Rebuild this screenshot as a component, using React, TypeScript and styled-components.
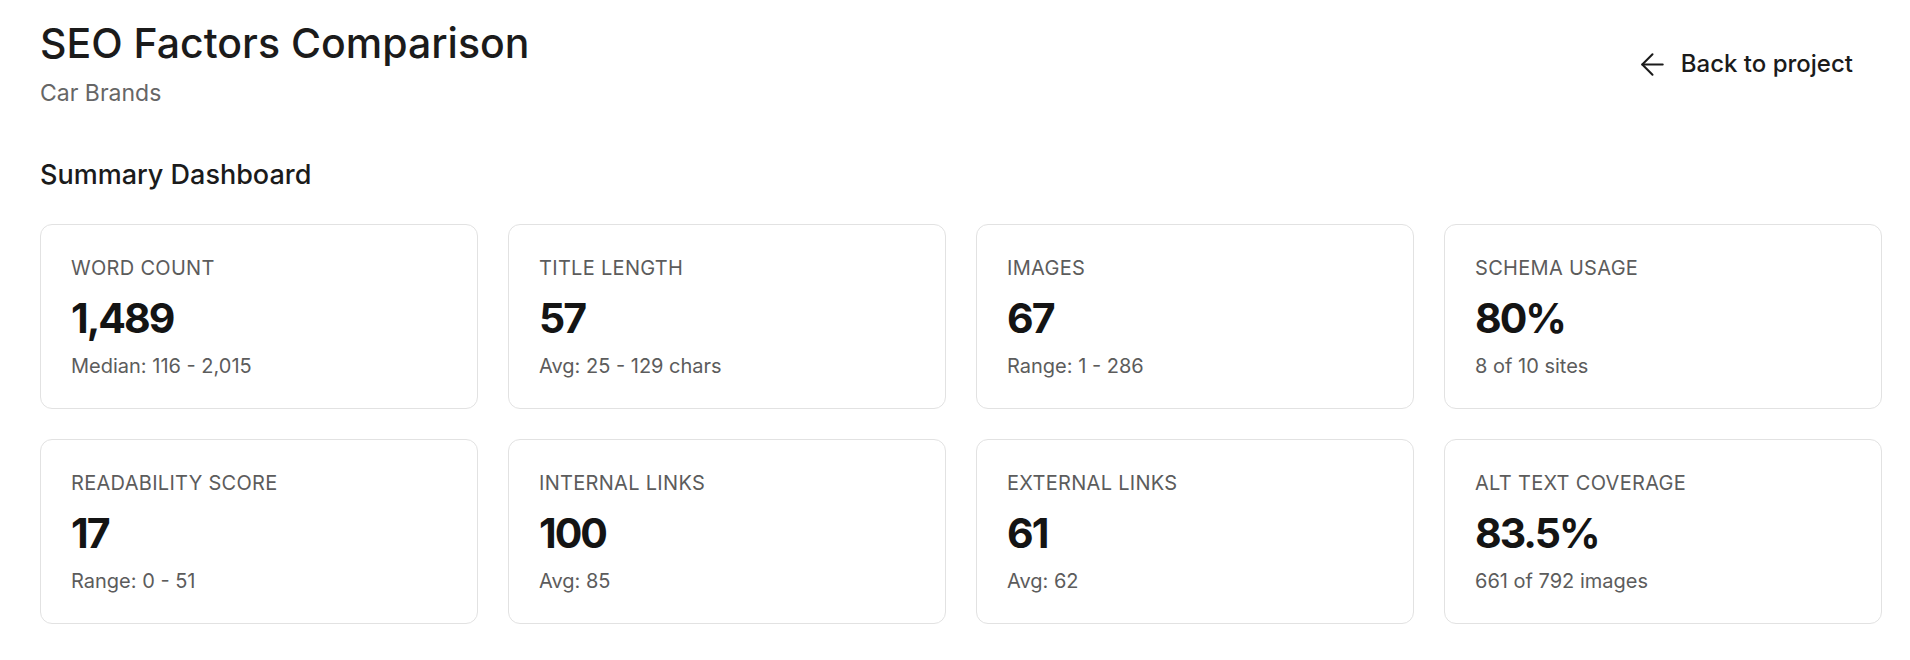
import React, { FunctionComponent } from "react";
import styled, { createGlobalStyle } from "styled-components";

const GlobalStyle = createGlobalStyle`
  html, body {
    margin: 0;
    padding: 0;
    background: #ffffff;
  }

  body {
    font-family: Inter, "Noto Sans", "Liberation Sans", sans-serif;
    color: #1a1a1a;
  }
`;

const ColorPalette = {
  ink: "#1b1b1b",
  value: "#141414",
  muted: "#666666",
  label: "#5c5c5c",
  border: "#e2e2e2",
};

const Styles = {
  Page: styled.div`
    padding: 19px 28px 40px 40px;
  `,

  Header: styled.header`
    display: flex;
    justify-content: space-between;
    align-items: flex-start;
  `,

  TitleBlock: styled.div`
    display: flex;
    flex-direction: column;
    gap: 12px;
  `,

  Title: styled.h1`
    margin: 0;
    font-size: 41px;
    line-height: 48px;
    font-weight: 500;
    color: ${ColorPalette.ink};
  `,

  Subtitle: styled.div`
    font-size: 23px;
    line-height: 28px;
    color: ${ColorPalette.muted};
  `,

  BackButton: styled.button`
    display: flex;
    align-items: center;
    gap: 11px;
    margin-top: 23px;
    padding: 0 29px 0 0;
    border: none;
    background: none;
    font-family: inherit;
    font-size: 24px;
    line-height: 44px;
    font-weight: 500;
    color: ${ColorPalette.ink};
    cursor: pointer;

    svg {
      margin-left: -7px;
    }
  `,

  SectionTitle: styled.h2`
    margin: 52px 0 33px;
    font-size: 27px;
    line-height: 32px;
    font-weight: 500;
    color: ${ColorPalette.ink};
  `,

  Grid: styled.div`
    display: grid;
    grid-template-columns: repeat(4, 1fr);
    gap: 30px;
  `,

  Card: styled.div`
    border: 1px solid ${ColorPalette.border};
    border-radius: 12px;
    padding: 31px 30px 30px;
    display: flex;
    flex-direction: column;
  `,

  Label: styled.div`
    font-size: 20px;
    line-height: 24px;
    letter-spacing: 0.3px;
    color: ${ColorPalette.label};
    text-transform: uppercase;
  `,

  Value: styled.div`
    margin-top: 14px;
    font-size: 41px;
    line-height: 48px;
    font-weight: 700;
    letter-spacing: -2px;
    color: ${ColorPalette.value};
  `,

  Detail: styled.div`
    margin-top: 12px;
    font-size: 20px;
    line-height: 24px;
    color: ${ColorPalette.label};
  `,
};

type Stat = {
  label: string;
  value: string;
  detail: string;
};

const stats: Stat[] = [
  { label: "Word Count", value: "1,489", detail: "Median: 116 - 2,015" },
  { label: "Title Length", value: "57", detail: "Avg: 25 - 129 chars" },
  { label: "Images", value: "67", detail: "Range: 1 - 286" },
  { label: "Schema Usage", value: "80%", detail: "8 of 10 sites" },
  { label: "Readability Score", value: "17", detail: "Range: 0 - 51" },
  { label: "Internal Links", value: "100", detail: "Avg: 85" },
  { label: "External Links", value: "61", detail: "Avg: 62" },
  { label: "Alt Text Coverage", value: "83.5%", detail: "661 of 792 images" },
];

const ArrowLeft: FunctionComponent = () => (
  <svg
    width="35"
    height="35"
    viewBox="0 0 24 24"
    fill="none"
    stroke="currentColor"
    strokeWidth="1.4"
    strokeLinecap="round"
    strokeLinejoin="round"
  >
    <path d="M19 12H5" />
    <path d="M12 19l-7-7 7-7" />
  </svg>
);

const StatCard: FunctionComponent<Stat> = ({ label, value, detail }) => (
  <Styles.Card>
    <Styles.Label>{label}</Styles.Label>
    <Styles.Value>{value}</Styles.Value>
    <Styles.Detail>{detail}</Styles.Detail>
  </Styles.Card>
);

export default function App() {
  return (
    <>
      <GlobalStyle />
      <Styles.Page>
        <Styles.Header>
          <Styles.TitleBlock>
            <Styles.Title>SEO Factors Comparison</Styles.Title>
            <Styles.Subtitle>Car Brands</Styles.Subtitle>
          </Styles.TitleBlock>
          <Styles.BackButton>
            <ArrowLeft />
            Back to project
          </Styles.BackButton>
        </Styles.Header>

        <Styles.SectionTitle>Summary Dashboard</Styles.SectionTitle>

        <Styles.Grid>
          {stats.map((stat) => (
            <StatCard key={stat.label} {...stat} />
          ))}
        </Styles.Grid>
      </Styles.Page>
    </>
  );
}
